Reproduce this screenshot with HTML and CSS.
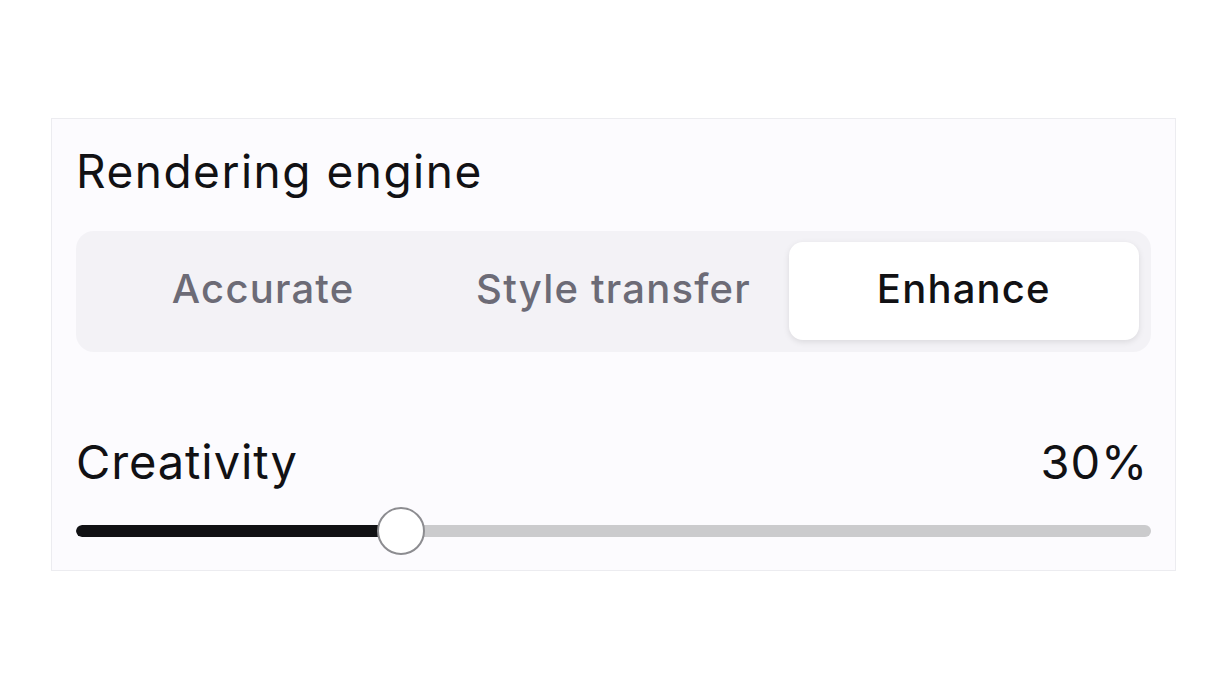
FILE: index.html
```html
<!DOCTYPE html>
<html lang="en">
<head>
<meta charset="utf-8">
<title>Rendering engine</title>
<link rel="stylesheet" href="styles.css">
</head>
<body>
<div class="panel">
  <div class="title">Rendering engine</div>
  <div class="segmented">
    <div class="seg">Accurate</div>
    <div class="seg">Style transfer</div>
    <div class="seg active">Enhance</div>
  </div>
  <div class="slider-head">
    <span class="label">Creativity</span>
    <span class="value">30%</span>
  </div>
  <div class="slider">
    <div class="track">
      <div class="fill" style="width: 30.2%"></div>
    </div>
    <div class="thumb" style="left: 30.2%"></div>
  </div>
</div>
</body>
</html>
```
FILE: styles.css
```css
html, body {
  margin: 0;
  padding: 0;
  background: #ffffff;
}
body {
  font-family: Inter, "Noto Sans", "Liberation Sans", sans-serif;
  color: #111114;
}
.panel {
  box-sizing: border-box;
  margin: 118px 0 0 51px;
  width: 1125px;
  height: 453px;
  background: #fcfbfe;
  border: 1px solid #ececf0;
  padding: 24px 24px 0 24px;
}
.title {
  font-size: 46px;
  line-height: 56px;
  font-weight: 400;
  letter-spacing: 1.5px;
}
.segmented {
  margin-top: 32px;
  display: grid;
  grid-template-columns: 1fr 1fr 1fr;
  padding: 11px 12px 12px 12px;
  background: #f3f2f6;
  border-radius: 18px;
  height: 121px;
  box-sizing: border-box;
}
.seg {
  display: flex;
  align-items: center;
  justify-content: center;
  font-size: 40px;
  font-weight: 500;
  letter-spacing: 1.2px;
  color: #6c6b76;
  border-radius: 14px;
  padding-bottom: 5px;
}
.seg.active {
  background: #ffffff;
  color: #111114;
  box-shadow: 0 2px 6px rgba(0, 0, 0, 0.10);
}
.slider-head {
  margin-top: 82px;
  display: flex;
  justify-content: space-between;
  align-items: baseline;
  font-size: 47px;
  line-height: 56px;
  letter-spacing: 0.9px;
  padding-right: 3px;
}
.slider {
  position: relative;
  margin-top: 17px;
  height: 48px;
  display: flex;
  align-items: center;
}
.track {
  width: 100%;
  height: 12px;
  border-radius: 6px;
  background: #cbcbcd;
  overflow: hidden;
}
.fill {
  height: 100%;
  background: #111114;
  border-radius: 6px;
}
.thumb {
  position: absolute;
  top: 0;
  width: 48px;
  height: 48px;
  box-sizing: border-box;
  margin-left: -24px;
  border-radius: 50%;
  background: #ffffff;
  border: 2px solid #8c8c90;
}
```
